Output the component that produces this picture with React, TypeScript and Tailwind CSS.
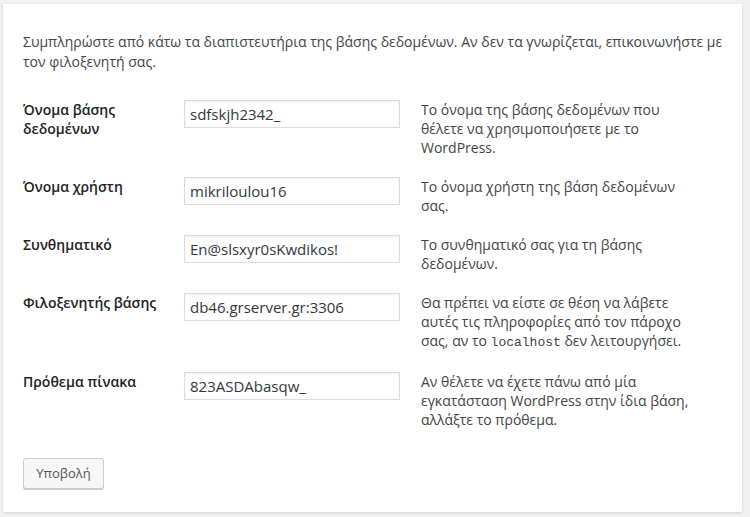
import React from "react";

const rows: { label: React.ReactNode; value: string; desc: React.ReactNode }[] = [
  {
    label: "Όνομα βάσης δεδομένων",
    value: "sdfskjh2342_",
    desc: "Το όνομα της βάσης δεδομένων που θέλετε να χρησιμοποιήσετε με το WordPress.",
  },
  {
    label: "Όνομα χρήστη",
    value: "mikriloulou16",
    desc: "Το όνομα χρήστη της βάση δεδομένων σας.",
  },
  {
    label: "Συνθηματικό",
    value: "En@slsxyr0sKwdikos!",
    desc: "Το συνθηματικό σας για τη βάσης δεδομένων.",
  },
  {
    label: "Φιλοξενητής βάσης",
    value: "db46.grserver.gr:3306",
    desc: (
      <>
        Θα πρέπει να είστε σε θέση να λάβετε αυτές τις πληροφορίες από τον πάροχο σας, αν το{" "}
        <code className="font-['Liberation_Mono',monospace] text-[13px]/[19px]">localhost</code> δεν λειτουργήσει.
      </>
    ),
  },
  {
    label: "Πρόθεμα πίνακα",
    value: "823ASDAbasqw_",
    desc: "Αν θέλετε να έχετε πάνω από μία εγκατάσταση WordPress στην ίδια βάση, αλλάξτε το πρόθεμα.",
  },
];

export default function App() {
  return (
    <div className="w-[750px] h-[517px] bg-[#f1f1f1] pt-[4px] pl-[3px] font-['Open_Sans',sans-serif] text-[#444] text-[14px] overflow-hidden">
      <div className="w-[739px] h-[508px] bg-white shadow-[0_1px_3px_rgba(0,0,0,0.13)] pl-[20px] pr-[20px] pt-[28px]">
        <p className="text-[14px] leading-[20px] text-[#444] w-[700px]">
          Συμπληρώστε από κάτω τα διαπιστευτήρια της βάσης δεδομένων. Αν δεν τα γνωρίζεται, επικοινωνήστε με τον φιλοξενητή σας.
        </p>
        <div className="mt-[18px] flex flex-col">
          {rows.map((r, i) => (
            <div key={i} className="flex py-[10px] leading-[19px]">
              <div className="w-[161px] shrink-0 pr-[20px] font-semibold text-[#222]">{r.label}</div>
              <div className="w-[216px] shrink-0 h-[28px] border border-[#ddd] shadow-[inset_0_1px_2px_rgba(0,0,0,0.07)] px-[5px] flex items-center text-[15px] text-[#32373c]">
                {r.value}
              </div>
              <div className="ml-[21px] w-[276px] text-[#444]">{r.desc}</div>
            </div>
          ))}
        </div>
        <div className="mt-[19px]">
          <button className="w-[81px] h-[31px] bg-[#f7f7f7] border border-[#ccc] rounded-[3px] shadow-[0_1px_0_#ccc] text-[13px] text-[#555]">
            Υποβολή
          </button>
        </div>
      </div>
    </div>
  );
}
